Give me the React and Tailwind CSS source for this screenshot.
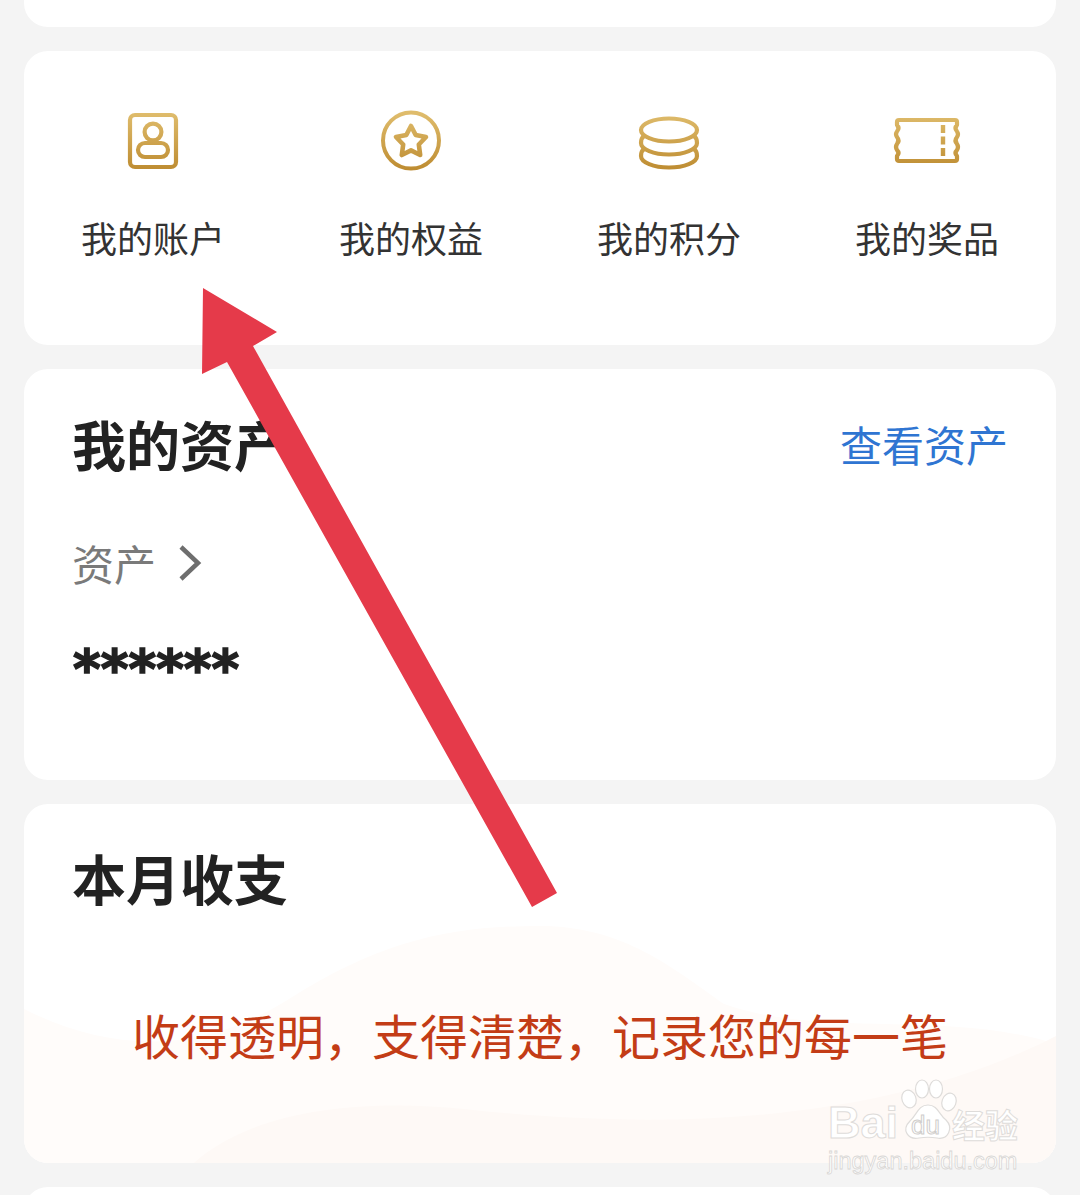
import React from "react";

const CJK = "font-['Noto_Sans_CJK_SC','Noto_Sans',sans-serif]";

// gold gradient shared by the four shortcut icons
const Gold = ({ id }) => (
  <defs>
    <linearGradient id={id} x1="0" y1="8" x2="0" y2="66" gradientUnits="userSpaceOnUse">
      <stop offset="0" stopColor="#dfbc6c" />
      <stop offset="1" stopColor="#bd8b30" />
    </linearGradient>
  </defs>
);

const AccountIcon = () => (
  <svg width="70" height="70" viewBox="0 0 70 70" fill="none" stroke="url(#gold-a)" strokeWidth="4.2">
    <Gold id="gold-a" />
    <rect x="12" y="10" width="46" height="52" rx="5" />
    <circle cx="35" cy="27" r="8.4" />
    <rect x="20" y="38" width="30" height="14" rx="7" />
  </svg>
);

const RightsIcon = () => (
  <svg width="70" height="70" viewBox="0 0 70 70" fill="none" stroke="url(#gold-b)" strokeWidth="4" strokeLinejoin="round">
    <Gold id="gold-b" />
    <circle cx="35" cy="35.5" r="28" />
    <polygon points="35,21 39.7,30 50,32 42.8,39.5 44.2,50 35,45.4 25.8,50 27.2,39.5 20,32 30.3,30" strokeWidth="4.6" />
  </svg>
);

const PointsIcon = () => (
  <svg width="70" height="70" viewBox="0 0 70 70" fill="none" stroke="url(#gold-c)" strokeWidth="4.2" strokeLinecap="round">
    <Gold id="gold-c" />
    <ellipse cx="35" cy="25" rx="28" ry="11.5" />
    <path d="M10 31 C7 33 7 36 7 38 A28 11.5 0 0 0 63 38 C63 36 63 33 60 31" />
    <path d="M10 44 C7 46 7 49 7 51 A28 11.5 0 0 0 63 51 C63 49 63 46 60 44" />
  </svg>
);

const PrizeIcon = () => (
  <svg width="70" height="70" viewBox="0 0 70 70" fill="none" stroke="url(#gold-d)" strokeWidth="4.2" strokeLinejoin="round">
    <Gold id="gold-d" />
    <path d="M7 15 H63 Q65 15 65 17 V20 Q62 23 65 26.5 Q67 29 65 32 Q62 35.5 65 39 Q67 42 65 45 Q62 48 65 51 V54 Q65 56 63 56 H7 Q5 56 5 54 V51 Q8 48 5 45 Q3 42 5 39 Q8 35.5 5 32 Q3 29 5 26.5 Q8 23 5 20 V17 Q5 15 7 15 Z" />
    <path d="M51 20 V52" strokeWidth="4.4" strokeDasharray="8 3.5" />
  </svg>
);

const shortcuts = [
  { label: "我的账户", Icon: AccountIcon },
  { label: "我的权益", Icon: RightsIcon },
  { label: "我的积分", Icon: PointsIcon },
  { label: "我的奖品", Icon: PrizeIcon },
];

const Watermark = () => (
  <div className="absolute left-[828px] top-[1078px] w-[196px] text-white">
    <div className="relative h-[66px]">
      <svg className="absolute left-[64px] top-0" width="68" height="64" viewBox="0 0 68 64" fill="#fff" stroke="#dedcda" strokeWidth="1.2">
        <ellipse cx="17" cy="21" rx="7" ry="9" transform="rotate(-20 17 21)" />
        <ellipse cx="30" cy="11" rx="6.5" ry="9" />
        <ellipse cx="44" cy="11" rx="6.5" ry="9" />
        <ellipse cx="57" cy="24" rx="7" ry="9" transform="rotate(20 57 24)" />
        <path d="M36 27 C46 27 47 37 54 42 C62 50 56 62 45 60 C39 59 33 59 27 60 C16 62 9 52 18 43 C25 37 26 27 36 27 Z" />
      </svg>
      <span className="absolute left-0 top-[23px] font-['Liberation_Sans',sans-serif] text-[45px] leading-[44px] font-bold text-white [-webkit-text-stroke:1px_#dedcda]">Bai</span>
      <span className="absolute left-[83px] top-[34px] font-['Liberation_Sans',sans-serif] text-[26px] leading-[26px] text-white [-webkit-text-stroke:1px_#cfcdcb]">du</span>
      <span className={`absolute left-[124px] top-[28px] ${CJK} text-[33px] leading-[36px] font-bold text-white [-webkit-text-stroke:1px_#dedcda]`}>经验</span>
    </div>
    <div className="mt-[3px] font-['Liberation_Sans',sans-serif] text-[23.5px] leading-[28px] text-white [-webkit-text-stroke:0.8px_#d8d6d4]">jingyan.baidu.com</div>
  </div>
);

export default function App() {
  return (
    <div className={`relative h-[1195px] overflow-hidden bg-[#f4f4f4] ${CJK}`}>
      <div className="flex flex-col gap-6 px-6">
        <div className="h-[27px] rounded-b-3xl bg-white" />

        <div className="grid h-[294px] grid-cols-4 rounded-3xl bg-white pt-[54px]">
          {shortcuts.map(({ label, Icon }) => (
            <div key={label} className="flex flex-col items-center">
              <Icon />
              <span className="mt-[36px] text-[36px] leading-[52px] text-[#333]">{label}</span>
            </div>
          ))}
        </div>

        <div className="h-[411px] rounded-3xl bg-white px-[48px] pt-[37px]">
          <div className="flex items-center justify-between">
            <h2 className="text-[54px] leading-[76px] font-bold text-[#222]">我的资产</h2>
            <span className="text-[42px] leading-[60px] text-[#2f75d2]">查看资产</span>
          </div>
          <div className="mt-[49px] flex items-center gap-[21px] text-[42px] leading-[64px] text-[#7a7a7a]">
            <span>资产</span>
            <svg width="26" height="38" viewBox="0 0 26 38" fill="none" stroke="#6e6e6e" strokeWidth="4.5">
              <path d="M4 3 L21 19 L4 35" />
            </svg>
          </div>
          <div className="mt-[40px] pl-[1px] font-['DejaVu_Sans',sans-serif] text-[53px] leading-[70px] font-bold text-[#222] [-webkit-text-stroke:1.6px_#222]">******</div>
        </div>

        <div className="relative h-[359px] overflow-hidden rounded-3xl bg-white">
          <svg className="absolute inset-0" width="1032" height="359" viewBox="0 0 1032 359">
            <path d="M0 205 C80 245 170 255 265 195 C360 135 430 122 516 122 C600 122 650 165 700 200 C800 235 920 205 1032 240 L1032 359 L0 359 Z" fill="#fffcfa" />
            <path d="M170 359 C230 305 340 295 440 305 C620 325 850 325 1032 232 L1032 359 Z" fill="#fef9f6" />
          </svg>
          <div className="relative px-[48px] pt-[36px]">
            <h2 className="text-[54px] leading-[76px] font-bold text-[#222]">本月收支</h2>
            <p className="mt-[84px] text-center text-[48px] leading-[68px] text-[#c33c16]">收得透明，支得清楚，记录您的每一笔</p>
          </div>
        </div>

        <div className="h-[60px] rounded-t-3xl bg-white" />
      </div>

      {/* annotation arrow pasted over the screenshot */}
      <svg className="absolute inset-0" width="1080" height="1195" viewBox="0 0 1080 1195">
        <polygon points="203,288 277,332 253,346 557,893 532,907 227,362 202,374" fill="#e53a4a" />
      </svg>

      <Watermark />
    </div>
  );
}
